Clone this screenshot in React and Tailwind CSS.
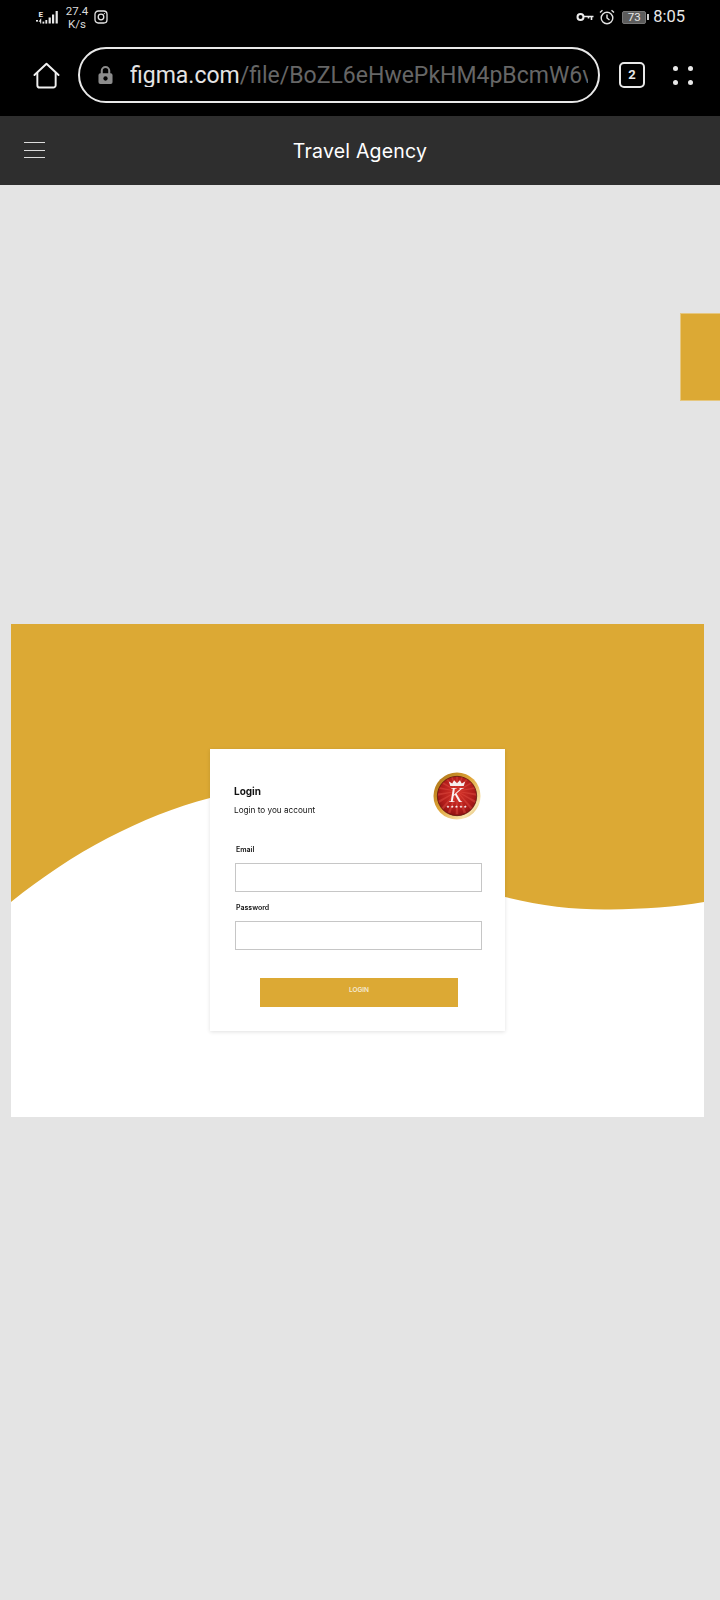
import React from "react";

function Signal() {
  return (
    <svg width="25" height="17" viewBox="0 0 25 17" fill="#e8e8e8">
      <text x="3.5" y="7.5" fontSize="8" fontWeight="700" fontFamily="Roboto, sans-serif">E</text>
      <rect x="1" y="11" width="2" height="1.6" />
      <path d="M6.2 9v5.5h-1v-1.7H3.6z" />
      <rect x="7.5" y="12.6" width="1.8" height="2" />
      <rect x="10.4" y="11" width="1.8" height="3.6" />
      <rect x="13.6" y="8.5" width="2.2" height="6" />
      <rect x="17" y="5.5" width="2.2" height="9" />
      <rect x="20.6" y="2" width="2.2" height="12.5" />
    </svg>
  );
}

function Insta() {
  return (
    <svg width="14" height="14" viewBox="0 0 14 14" fill="none" stroke="#e4e4e4" strokeWidth="1.3">
      <rect x="1" y="1" width="12" height="12" rx="3.2" />
      <circle cx="7" cy="7" r="2.8" />
      <circle cx="10.4" cy="3.6" r="0.6" fill="#e4e4e4" stroke="none" />
    </svg>
  );
}

function Key() {
  return (
    <svg width="18" height="10" viewBox="0 0 18 10" fill="none" stroke="#ededed">
      <circle cx="4.5" cy="5" r="3" strokeWidth="2" />
      <path d="M7.5 4.5H17.5M15.5 4.5v3.5M12.5 4.5v2" strokeWidth="1.6" />
    </svg>
  );
}

function Alarm() {
  return (
    <svg width="16" height="16" viewBox="0 0 16 16" fill="none" stroke="#e4e4e4" strokeWidth="1.4">
      <circle cx="8" cy="9" r="5.8" />
      <path d="M8 5.5V9l2.5 2M1 3.5 3.5 1.2M15 3.5 12.5 1.2" />
    </svg>
  );
}

function Home() {
  return (
    <svg width="27" height="27" viewBox="0 0 28 28" fill="none" stroke="#f0f0f0" strokeWidth="2" strokeLinejoin="round">
      <path d="M1.5 13.5 14 1.8l12.5 11.7" strokeLinecap="round" />
      <path d="M4.5 11v13a2.5 2.5 0 0 0 2.5 2.5h14a2.5 2.5 0 0 0 2.5-2.5V11" />
    </svg>
  );
}

function Lock() {
  return (
    <svg width="15" height="20" viewBox="0 0 16 20">
      <path d="M4 9V5.5a4 4 0 0 1 8 0V9" fill="none" stroke="#8c8c8c" strokeWidth="2.2" />
      <rect x="0.5" y="8" width="15" height="11.5" rx="2" fill="#8c8c8c" />
      <circle cx="8" cy="13.7" r="2.3" fill="#000" />
    </svg>
  );
}

function Logo() {
  const rays = Array.from({ length: 18 }, (_, i) => (i * 360) / 18);
  return (
    <svg width="48" height="48" viewBox="0 0 50 50" className="blur-[0.4px]">
      <defs>
        <linearGradient id="ring" x1="0" y1="0" x2="1" y2="1">
          <stop offset="0" stopColor="#a46c12" />
          <stop offset="0.45" stopColor="#dfa436" />
          <stop offset="0.8" stopColor="#f8e4ae" />
          <stop offset="1" stopColor="#c9922f" />
        </linearGradient>
        <radialGradient id="red" cx="0.5" cy="0.42" r="0.6">
          <stop offset="0" stopColor="#d9362c" />
          <stop offset="0.7" stopColor="#b01c1a" />
          <stop offset="1" stopColor="#8a1212" />
        </radialGradient>
        <clipPath id="inner">
          <circle cx="25" cy="25" r="20" />
        </clipPath>
      </defs>
      <circle cx="25" cy="25" r="24.5" fill="url(#ring)" />
      <circle cx="25" cy="25" r="20.5" fill="url(#red)" stroke="#5e1410" strokeWidth="0.8" />
      <g clipPath="url(#inner)">
        {rays.map((a) => (
          <path key={a} d="M25 20 L23.6 -4 L26.4 -4 Z" fill="#e8584c" opacity="0.4" transform={`rotate(${a} 25 20)`} />
        ))}
      </g>
      <path d="M18 14.5 l-1.5-4.5 3.5 2 2-3.4 3 3 3-3 2 3.4 3.5-2-1.5 4.5z" fill="#f6eeee" />
      <text x="24" y="31" textAnchor="middle" fontSize="21" fontStyle="italic" fontFamily="Liberation Serif, serif" fill="#fbf3f3">K</text>
      <text x="25" y="37.5" textAnchor="middle" fontSize="4" letterSpacing="0.9" fontFamily="DejaVu Sans, sans-serif" fill="#fff">★★★★★</text>
    </svg>
  );
}

export default function App() {
  return (
    <div className="w-[720px] h-[1600px] bg-[#e4e4e4] overflow-hidden font-[Roboto,sans-serif]">
      <header className="bg-black h-[116px]">
        <div className="h-[34px] flex items-center pl-[35px] pr-[35px]">
          <Signal />
          <div className="ml-[5px] mt-px w-[24px] text-center text-[11.5px] leading-[13px] text-[#dcdcdc]">
            <div>27.4</div>
            <div>K/s</div>
          </div>
          <div className="ml-[5px]"><Insta /></div>
          <div className="ml-auto flex items-center">
            <Key />
            <div className="ml-[5px]"><Alarm /></div>
            <div className="ml-[7px] flex items-center">
              <div className="w-[24px] h-[13px] rounded-[2px] border border-[#777] bg-[#5c5c5c] text-[11.5px] leading-[11px] text-center text-[#e6e6e6]">73</div>
              <div className="w-[2px] h-[6px] bg-[#cfcfcf] ml-px" />
            </div>
            <span className="ml-[4px] text-[16.5px] leading-none text-[#e8e8e8]">8:05</span>
          </div>
        </div>
        <div className="flex items-center pt-[13px] pl-[33px]">
          <Home />
          <div className="ml-[18px] w-[522px] h-[56px] rounded-[28px] border-2 border-[#e8e8e8] flex items-center pl-[18px] pr-[10px]">
            <Lock />
            <div className="ml-[17px] flex-1 overflow-hidden whitespace-nowrap text-[23px] leading-none">
              <span className="text-[#e4e4e4]">figma.com</span>
              <span className="text-[#666]">/file/BoZL6eHwePkHM4pBcmW6v</span>
            </div>
          </div>
          <div className="ml-[19px] w-[26px] h-[26px] rounded-[5px] border-2 border-[#e8e8e8] flex items-center justify-center text-[13px] font-bold text-[#e8e8e8]">2</div>
          <div className="ml-[28px] grid grid-cols-2 gap-x-[10px] gap-y-[9px]">
            <span className="w-[5px] h-[5px] rounded-full bg-[#e8e8e8]" />
            <span className="w-[5px] h-[5px] rounded-full bg-[#e8e8e8]" />
            <span className="w-[5px] h-[5px] rounded-full bg-[#e8e8e8]" />
            <span className="w-[5px] h-[5px] rounded-full bg-[#e8e8e8]" />
          </div>
        </div>
      </header>

      <nav className="relative h-[69px] bg-[#2e2e2e] flex items-center justify-center font-[Inter,sans-serif]">
        <div className="absolute left-[24px] top-[26px] w-[21px] flex flex-col gap-[6.5px]">
          <span className="h-px bg-[#dcdcdc]" />
          <span className="h-px bg-[#dcdcdc]" />
          <span className="h-px bg-[#dcdcdc]" />
        </div>
        <span className="text-[19.5px] leading-[26px] tracking-[0.2px] text-white">Travel Agency</span>
      </nav>

      <div className="flex justify-end pt-[128px]">
        <div className="w-[40px] h-[88px] bg-[#dca934] border border-r-0 border-[#e6c77f]" />
      </div>

      <section className="relative ml-[11px] mt-[223px] w-[693px] h-[493px] bg-white pt-[125px] pl-[199px]">
        <svg className="absolute inset-0" width="693" height="493" viewBox="0 0 693 493">
          <path
            d="M0 278C62 228 130 192 199 174C310 145 400 250 494 273C530 282 565 286 599 285.5C632 285 665 283 693 278V0H0Z"
            fill="#dca934"
          />
        </svg>
        <div className="relative w-[295px] h-[282px] bg-white shadow-[0_1px_4px_rgba(0,0,0,0.12)] font-[Inter,sans-serif] text-[#111]">
          <div className="flex justify-between pl-[24px] pr-[24px] pt-[23px]">
            <div className="pt-[13px] blur-[0.3px]">
              <div className="text-[10px] leading-[12px] font-bold">Login</div>
              <div className="mt-[7px] text-[8.2px] leading-[12px]">Login to you account</div>
            </div>
            <Logo />
          </div>
          <div className="pl-[25px] pr-[23px] pt-[25px]">
            <label className="block pl-px text-[7px] leading-[10px] font-semibold blur-[0.3px]">Email</label>
            <div className="mt-[8px] h-[29px] border border-[#c6c6c6]" />
            <label className="block pl-px mt-[11px] text-[7px] leading-[10px] font-semibold blur-[0.3px]">Password</label>
            <div className="mt-[8px] h-[29px] border border-[#c6c6c6]" />
          </div>
          <div className="mt-[28px] ml-[50px] mr-[47px] h-[29px] bg-[#dca934] text-center text-[6.5px] leading-[24px] font-semibold text-[#f5ead2]">LOGIN</div>
        </div>
      </section>
    </div>
  );
}
